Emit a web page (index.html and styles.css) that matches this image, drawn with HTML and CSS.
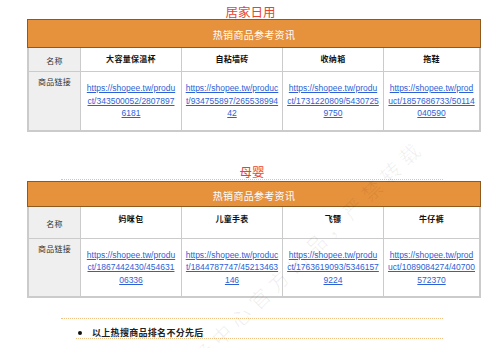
FILE: index.html
```html
<!DOCTYPE html>
<html lang="zh">
<head>
<meta charset="utf-8">
<title>热销商品参考资讯</title>
<link rel="stylesheet" href="styles.css">
</head>
<body>
<div class="page">
  <h2 class="title first">居家日用</h2>
  <table class="tbl t1">
    <colgroup><col class="w1"><col class="w2"><col class="w2"><col class="w2"><col class="w5"></colgroup>
    <tr class="r-head"><th class="head" colspan="5">热销商品参考资讯</th></tr>
    <tr class="r-name">
      <td class="lab mid c1">名称</td>
      <td class="name c2">大容量保温杯</td>
      <td class="name c3">自粘墙砖</td>
      <td class="name c4">收纳箱</td>
      <td class="name c5">拖鞋</td>
    </tr>
    <tr class="r-link last">
      <td class="lab top c1">商品链接</td>
      <td class="link c2"><a href="#">https://shopee.tw/produ<br>ct/343500052/2807897<br>6181</a></td>
      <td class="link c3"><a href="#">https://shopee.tw/produc<br>t/934755897/265538994<br>42</a></td>
      <td class="link c4"><a href="#">https://shopee.tw/produ<br>ct/1731220809/5430725<br>9750</a></td>
      <td class="link c5"><a href="#">https://shopee.tw/prod<br>uct/1857686733/50114<br>040590</a></td>
    </tr>
  </table>

  <h2 class="title second">母婴</h2>
  <table class="tbl t2">
    <colgroup><col class="w1"><col class="w2"><col class="w2"><col class="w2"><col class="w5"></colgroup>
    <tr class="r-head"><th class="head" colspan="5">热销商品参考资讯</th></tr>
    <tr class="r-name">
      <td class="lab mid c1">名称</td>
      <td class="name c2">妈咪包</td>
      <td class="name c3">儿童手表</td>
      <td class="name c4">飞镖</td>
      <td class="name c5">牛仔裤</td>
    </tr>
    <tr class="r-link last">
      <td class="lab top c1">商品链接</td>
      <td class="link c2"><a href="#">https://shopee.tw/produ<br>ct/1867442430/454631<br>06336</a></td>
      <td class="link c3"><a href="#">https://shopee.tw/produc<br>t/1844787747/45213463<br>146</a></td>
      <td class="link c4"><a href="#">https://shopee.tw/produ<br>ct/1763619093/5346157<br>9224</a></td>
      <td class="link c5"><a href="#">https://shopee.tw/prod<br>uct/1089084274/40700<br>572370</a></td>
    </tr>
  </table>

  <div class="sep"></div>
  <ul class="notes">
    <li>以上热搜商品排名不分先后</li>
  </ul>
</div>
<div class="wm-layer"><div class="watermark">卖家服务中心官方出品，严禁转载</div></div>
</body>
</html>
```
FILE: styles.css
```css
html, body {
  margin: 0;
  padding: 0;
  overflow: hidden;
  background: #ffffff;
}
body {
  width: 501px;
  height: 348px;
  position: relative;
  font-family: "Liberation Sans", "Noto Sans CJK SC", sans-serif;
}
.page {
  padding-top: 4px;
}
.title {
  margin: 0;
  font-family: "Noto Sans CJK SC", sans-serif;
  font-weight: normal;
  font-size: 12.5px;
  color: #ea4230;
  text-align: center;
}
.title.first {
  height: 15px;
  line-height: 15px;
}
.title.second {
  margin: 33px 0 1px 61px;
  width: 382px;
  height: 14px;
  line-height: 14px;
  border-bottom: 1px dotted #f3c084;
}
.tbl {
  margin-left: 27px;
  width: 454px;
  table-layout: fixed;
  border-collapse: separate;
  border-spacing: 0;
}
.w1 { width: 54px; }
.w2 { width: 101px; }
.w5 { width: 97px; }
.tbl td, .tbl th {
  padding: 0;
  box-sizing: border-box;
}
.tbl .head {
  background: #e6913b;
  border: 1px solid #8f5a1d;
  color: #ffffff;
  font-family: "Noto Sans CJK SC", sans-serif;
  font-size: 10px;
  font-weight: normal;
  letter-spacing: 0.3px;
  text-align: center;
  vertical-align: middle;
  padding-top: 2px;
}
.t1 .r-head { height: 29px; }
.t1 .r-name { height: 24px; }
.t1 .r-link { height: 60px; }
.t2 .r-head { height: 26px; }
.t2 .r-name { height: 32px; }
.t2 .r-link { height: 59px; }

.tbl td {
  border-right: 1px solid #cbcbcb;
  border-bottom: 1px solid #cbcbcb;
  text-align: center;
  font-family: "Noto Sans CJK SC", sans-serif;
  font-size: 8px;
  line-height: 10px;
}
.tbl td.c1 {
  border-left: 2px solid #cbcbcb;
  background: #efefef;
  color: #333333;
  letter-spacing: 0.3px;
}
.tbl td.c5 {
  border-right: 2px solid #cbcbcb;
}
.tbl .last td {
  border-bottom: 2px solid #cbcbcb;
}
.tbl .lab.mid { vertical-align: middle; padding-top: 3px; }
.tbl .lab.top { vertical-align: top; padding-top: 5px; }
.tbl .name {
  vertical-align: top;
  padding-top: 6px;
  color: #111111;
  font-weight: bold;
  letter-spacing: 0.3px;
}
.t2 .name { padding-top: 7px; }
.link {
  vertical-align: middle;
  white-space: nowrap;
}
.link a {
  font-family: "Liberation Sans", sans-serif;
  font-size: 8.5px;
  line-height: 11.5px;
  color: #2d5fd6;
  text-decoration: underline;
}
.tbl td.link {
  line-height: 11.5px;
}
.sep {
  margin: 20px 0 0 61px;
  width: 382px;
  border-top: 1px dotted #f3c084;
}
.notes {
  list-style: none;
  margin: 0 0 0 76px;
  padding: 0;
  width: 367px;
}
.notes li {
  position: relative;
  padding: 9px 0 0 16px;
  line-height: 10px;
  font-family: "Noto Sans CJK SC", sans-serif;
  font-size: 9px;
  font-weight: bold;
  color: #222222;
  letter-spacing: 0.3px;
  border-bottom: 1px dotted #f3c084;
}
.notes li::before {
  content: "";
  position: absolute;
  left: 2px;
  top: 12px;
  width: 4px;
  height: 4px;
  border-radius: 50%;
  background: #111111;
}
.wm-layer {
  position: absolute;
  left: 0;
  top: 0;
  width: 501px;
  height: 348px;
  overflow: hidden;
  pointer-events: none;
}
.watermark {
  position: absolute;
  left: 140px;
  top: 404px;
  white-space: nowrap;
  font-family: "Noto Sans CJK SC", sans-serif;
  font-size: 20px;
  line-height: 20px;
  letter-spacing: 6px;
  color: rgba(0, 0, 0, 0.06);
  transform-origin: 0 50%;
  transform: rotate(-44deg);
}
```
